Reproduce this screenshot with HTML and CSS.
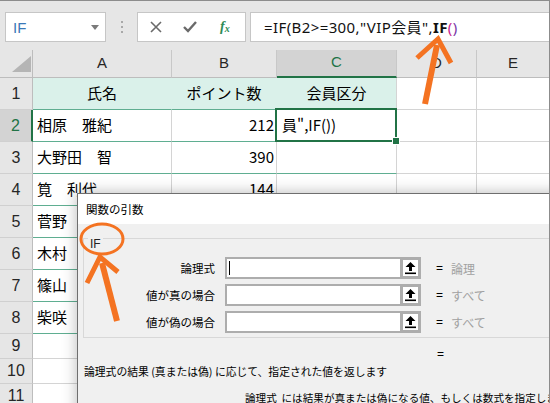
FILE: index.html
```html
<!DOCTYPE html>
<html lang="ja">
<head>
<meta charset="utf-8">
<title>IF</title>
<link rel="stylesheet" href="styles.css">
</head>
<body>
<div class="app">
  <div class="toolbar">
    <div class="namebox"><span class="nb-text">IF</span><span class="nb-arrow"></span></div>
    <div class="grip"><i></i><i></i><i></i></div>
    <div class="fbtns">
      <svg class="ico" width="14" height="14" viewBox="0 0 14 14"><path d="M2 2 L12 12 M12 2 L2 12" stroke="#6a6a6a" stroke-width="1.6" fill="none"/></svg>
      <svg class="ico" width="16" height="14" viewBox="0 0 16 14"><path d="M2 7 L6 11 L14 2" stroke="#6a6a6a" stroke-width="2.4" fill="none"/></svg>
      <span class="fx">f<sub>x</sub></span>
    </div>
    <div class="formula">=IF(B2&gt;=300,"VIP会員",<b>IF</b><span class="p1">(</span><span class="p2">)</span></div>
  </div>

  <div class="sheet">
    <div class="c corner"><svg width="20" height="17" viewBox="0 0 20 17"><path d="M19 0 L19 16 L0 16 Z" fill="#b5b5b5"/></svg></div>
    <div class="c ch">A</div>
    <div class="c ch">B</div>
    <div class="c ch sel">C</div>
    <div class="c ch">D</div>
    <div class="c ch">E</div>

    <div class="c rh">1</div>
    <div class="c t hd">氏名</div>
    <div class="c t hd">ポイント数</div>
    <div class="c t hd last">会員区分</div>
    <div class="c"></div>
    <div class="c"></div>

    <div class="c rh sel">2</div>
    <div class="c t">相原　雅紀</div>
    <div class="c t num">212</div>
    <div class="c t active">員",IF())</div>
    <div class="c"></div>
    <div class="c"></div>

    <div class="c rh">3</div>
    <div class="c t">大野田　智</div>
    <div class="c t num">390</div>
    <div class="c t"></div>
    <div class="c"></div>
    <div class="c"></div>

    <div class="c rh">4</div>
    <div class="c t">筧　利代</div>
    <div class="c t num">144</div>
    <div class="c t"></div>
    <div class="c"></div>
    <div class="c"></div>

    <div class="c rh">5</div>
    <div class="c t">菅野</div>
    <div class="c t"></div>
    <div class="c t"></div>
    <div class="c"></div>
    <div class="c"></div>

    <div class="c rh">6</div>
    <div class="c t">木村</div>
    <div class="c t"></div>
    <div class="c t"></div>
    <div class="c"></div>
    <div class="c"></div>

    <div class="c rh">7</div>
    <div class="c t">篠山</div>
    <div class="c t"></div>
    <div class="c t"></div>
    <div class="c"></div>
    <div class="c"></div>

    <div class="c rh">8</div>
    <div class="c t">柴咲</div>
    <div class="c t"></div>
    <div class="c t"></div>
    <div class="c"></div>
    <div class="c"></div>

    <div class="c rh">9</div>
    <div class="c"></div><div class="c"></div><div class="c"></div><div class="c"></div><div class="c"></div>
    <div class="c rh">10</div>
    <div class="c"></div><div class="c"></div><div class="c"></div><div class="c"></div><div class="c"></div>
    <div class="c rh">11</div>
    <div class="c"></div><div class="c"></div><div class="c"></div><div class="c"></div><div class="c"></div>
  </div>

  <div class="dialog">
    <div class="dtitle">関数の引数</div>
    <div class="dbody">
      <div class="group">
        <span class="legend">IF</span>
        <div class="args">
          <div class="lbl">論理式</div>
          <div class="inp"><span class="caret"></span></div>
          <div class="ref"><svg width="13" height="14" viewBox="0 0 13 14"><path d="M6.5 1 L11.5 6 L8 6 L8 10 L5 10 L5 6 L1.5 6 Z" fill="#000"/><rect x="1" y="11.5" width="11" height="1.6" fill="#000"/></svg></div>
          <div class="eq">=</div>
          <div class="val">論理</div>

          <div class="lbl">値が真の場合</div>
          <div class="inp"></div>
          <div class="ref"><svg width="13" height="14" viewBox="0 0 13 14"><path d="M6.5 1 L11.5 6 L8 6 L8 10 L5 10 L5 6 L1.5 6 Z" fill="#000"/><rect x="1" y="11.5" width="11" height="1.6" fill="#000"/></svg></div>
          <div class="eq">=</div>
          <div class="val">すべて</div>

          <div class="lbl">値が偽の場合</div>
          <div class="inp"></div>
          <div class="ref"><svg width="13" height="14" viewBox="0 0 13 14"><path d="M6.5 1 L11.5 6 L8 6 L8 10 L5 10 L5 6 L1.5 6 Z" fill="#000"/><rect x="1" y="11.5" width="11" height="1.6" fill="#000"/></svg></div>
          <div class="eq">=</div>
          <div class="val">すべて</div>
        </div>
      </div>
      <div class="result">=</div>
      <div class="desc">論理式の結果 (真または偽) に応じて、指定された値を返します</div>
      <div class="desc2">論理式&nbsp; には結果が真または偽になる値、もしくは数式を指定します。</div>
    </div>
  </div>

  <svg class="annot" width="550" height="403" viewBox="0 0 550 403">
    <g stroke="#f47322" fill="none">
      <line x1="425" y1="103" x2="437" y2="44" stroke-width="6"/>
      <polyline points="417,57 438,38 451,62" stroke-width="5" stroke-linejoin="miter"/>
      <ellipse cx="102" cy="238" rx="21" ry="15" stroke-width="3"/>
      <line x1="117" y1="320" x2="102" y2="262" stroke-width="6"/>
      <polyline points="87,282 100,256 118,271" stroke-width="5" stroke-linejoin="miter"/>
    </g>
  </svg>
</div>
</body>
</html>
```

FILE: styles.css
```css
* { box-sizing: border-box; }
html, body { margin: 0; padding: 0; }
body {
  width: 550px;
  height: 403px;
  overflow: hidden;
  background: #ffffff;
  font-family: "Noto Sans CJK JP", "Noto Sans", sans-serif;
  color: #000;
}
.app {
  position: relative;
  width: 550px;
  height: 403px;
  overflow: hidden;
  border-top: 1px solid #8c8c8c;
  border-right: 1px solid #8c8c8c;
}

/* toolbar */
.toolbar {
  height: 49px;
  background: #e6e6e6;
  display: flex;
  align-items: flex-start;
  padding-top: 11px;
}
.toolbar > * { flex: none; }
.namebox {
  margin-left: 5px;
  width: 101px;
  height: 30px;
  background: #fff;
  border: 1px solid #c6c6c6;
  display: flex;
  align-items: center;
  justify-content: space-between;
  padding: 0 6px 0 7px;
}
.nb-text {
  font-family: "Liberation Sans", sans-serif;
  font-size: 15px;
  color: #3a78b8;
}
.nb-arrow {
  width: 0; height: 0;
  border-left: 4px solid transparent;
  border-right: 4px solid transparent;
  border-top: 5px solid #7a7a7a;
}
.grip {
  width: 31px;
  height: 30px;
  display: flex;
  flex-direction: column;
  align-items: center;
  justify-content: center;
  gap: 3px;
}
.grip i {
  display: block;
  width: 2px; height: 2px;
  background: #a8a8a8;
}
.fbtns {
  width: 109px;
  height: 30px;
  background: #fff;
  border: 1px solid #c6c6c6;
  display: flex;
  align-items: center;
  padding-left: 11px;
  gap: 19px;
}
.fbtns .ico { display: block; }
.fx {
  font-family: "Liberation Serif", serif;
  font-style: italic;
  font-weight: bold;
  font-size: 14px;
  color: #2e8b57;
  margin-left: 3px;
  line-height: 1;
}
.fx sub { font-size: 10px; vertical-align: -1px; }
.formula {
  margin-left: 4px;
  width: 320px;
  height: 30px;
  background: #fff;
  border: 1px solid #c6c6c6;
  padding-left: 13px;
  font-family: "Noto Sans", "Noto Sans CJK JP", sans-serif;
  font-size: 15px;
  letter-spacing: 0.4px;
  line-height: 28px;
  white-space: nowrap;
  color: #111;
}
.formula b { font-weight: bold; }
.formula .p1 { color: #c8258f; }
.formula .p2 { color: #7a3aa8; }

/* sheet */
.sheet {
  display: grid;
  grid-template-columns: 33px 139px 105px 120px 80px 73px;
  grid-template-rows: 28px repeat(8, 32px) repeat(3, 25px);
}
.c {
  border-right: 1px solid #d4d4d4;
  border-bottom: 1px solid #d4d4d4;
  display: flex;
  align-items: center;
  padding: 0 4px 2px;
  font-size: 15px;
  line-height: 20px;
  white-space: nowrap;
  overflow: visible;
  position: relative;
}
.corner {
  background: #e6e6e6;
  border-right-color: #bdbdbd;
  border-bottom-color: #bdbdbd;
  align-items: flex-end;
  justify-content: flex-end;
  padding: 0 0 4px;
}
.corner svg { display: block; }
.ch {
  background: #e6e6e6;
  border-right-color: #c8c8c8;
  border-bottom-color: #bdbdbd;
  justify-content: center;
  font-family: "Liberation Sans", sans-serif;
  color: #262626;
}
.ch.sel {
  background: #d3d3d3;
  color: #217346;
  border-bottom: 2px solid #217346;
}
.rh {
  background: #e6e6e6;
  border-right-color: #bdbdbd;
  border-bottom-color: #d0d0d0;
  justify-content: center;
  font-family: "Liberation Sans", sans-serif;
  font-size: 16px;
  color: #262626;
  padding: 0;
}
.rh.sel {
  background: #d3d3d3;
  color: #217346;
  border-right: 2px solid #217346;
}
.t { border-bottom-color: #5fae91; }
.hd {
  background: #daf1ea;
  border-right-color: #daf1ea;
  justify-content: center;
}
.hd.last { border-right-color: #d4d4d4; }
.num { justify-content: flex-end; padding-right: 2px; }
.active { padding-left: 5px; }
.active::after {
  content: "";
  position: absolute;
  left: -2px; top: -2px; right: -1px; bottom: -1px;
  border: 2px solid #217346;
}
.active::before {
  content: "";
  position: absolute;
  right: -4px; bottom: -4px;
  width: 6px; height: 6px;
  background: #217346;
  border: 1px solid #fff;
  z-index: 2;
}

/* dialog */
.dialog {
  position: absolute;
  left: 77px;
  top: 192px;
  width: 490px;
  height: 240px;
  border: 1px solid #6e6e6e;
  background: #f0f0f0;
  box-shadow: 0 0 14px rgba(0,0,0,0.28);
  font-size: 11.5px;
  color: #000;
}
.dtitle {
  height: 30px;
  background: #fff;
  padding-left: 8px;
  line-height: 30px;
  font-size: 11.5px;
}
.dbody {
  padding: 14px 0 0 5px;
}
.group {
  border: 1px solid #d8d8d8;
  border-right: none;
  padding-bottom: 4px;
}
.legend {
  display: inline-block;
  margin: -3px 0 0 4px;
  padding: 0 2px;
  line-height: 16px;
  font-family: "Liberation Sans", sans-serif;
  font-size: 12px;
  color: #222;
  background: #f0f0f0;
  vertical-align: top;
}
.args {
  margin-top: 2px;
  display: grid;
  grid-template-columns: 141px 175px 21px 30px auto;
  grid-auto-rows: 22px;
  row-gap: 5px;
  align-items: center;
}
.lbl {
  text-align: right;
  padding-right: 10px;
  line-height: 22px;
}
.inp {
  height: 22px;
  background: #fff;
  border: 2px solid #adadad;
  border-right: none;
  position: relative;
}
.caret {
  display: block;
  position: absolute;
  left: 2px; top: 2px;
  width: 1px; height: 14px;
  background: #000;
}
.ref {
  height: 22px;
  border: 3px solid #adadad;
  background: #fff;
  display: flex;
  align-items: center;
  justify-content: center;
}
.ref svg { display: block; }
.eq {
  padding-left: 15px;
  font-family: "Liberation Sans", sans-serif;
  font-size: 12px;
}
.val {
  color: #a0a0a0;
  font-size: 12px;
}
.result {
  margin-top: 8px;
  padding-left: 354px;
  line-height: 16px;
  font-family: "Liberation Sans", sans-serif;
  font-size: 12px;
}
.desc {
  margin-top: 1px;
  padding-left: 1px;
  line-height: 16px;
  font-size: 10.8px;
  white-space: nowrap;
}
.desc2 {
  margin-top: 11px;
  padding-left: 162px;
  line-height: 16px;
  font-size: 10.6px;
  white-space: nowrap;
}

.annot {
  position: absolute;
  left: 0; top: 0;
  pointer-events: none;
}
```
